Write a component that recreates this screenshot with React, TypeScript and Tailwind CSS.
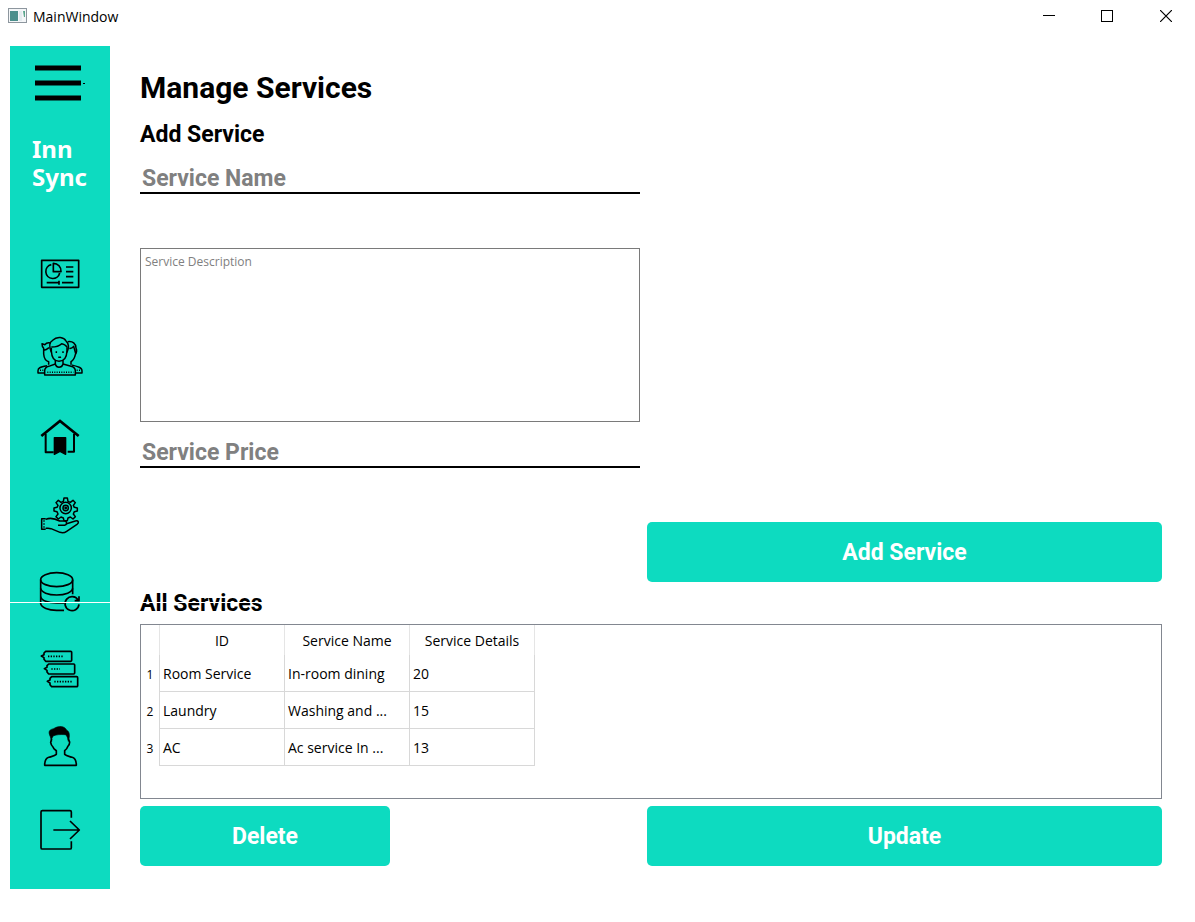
import type { ReactNode } from "react";

const nav: { label: string; viewBox: string; art: ReactNode }[] = [
  {
    label: "Dashboard",
    viewBox: "48 -33 144 240",
    art: (
      <g strokeWidth="5">
        <rect x="65" y="46" width="111" height="81" />
        <path d="M94 59a21 21 0 1 0 25 25" />
        <path d="M100 55v25h23a23 23 0 0 0-23-25z" />
        <path d="M138 66h22M138 80h22M138 95h22M80 113h36M126 113h34M117 107v12" />
      </g>
    ),
  },
  {
    label: "Guests",
    viewBox: "48 -33 144 240",
    art: (
      <g strokeWidth="4.5">
        <path d="M94 82c-7-17-6-31 4-36 14-14 34-9 40 2 9 8 9 20 3 34" />
        <path d="M94 66c14 0 24-3 31-10 8 2 14 5 16 11" />
        <path d="M94 68v10c1 19 9 31 23 31s23-12 24-31V67" />
        <path d="M106 106v12c2 6 6 9 11 9s10-3 12-9v-12" />
        <path d="M106 117l-20 7c-8 2-12 5-12 14v12h92v-12c0-9-5-12-13-14l-24-7" />
        <path d="M92 54c-9-2-14 0-17 5l-9-3c0 7 2 11 5 14v17c1 12 8 21 15 23v9M72 76c6-1 10-4 15-8" />
        <path d="M143 50c15-3 25 6 25 19 3 6 1 15-2 20-2 10-8 18-13 21v9M148 70c7 1 10-2 13-6l6 22" />
        <path d="M81 122c-15 4-27 4-27 15v7h18M155 120c17 4 31 7 31 17v7h-18" />
        <path d="M82 142h78M60 136h10M170 136h10" strokeDasharray="3 4" />
        <path d="M109 79v5M129 79v5M115 96q4 2 8 0" />
      </g>
    ),
  },
  {
    label: "Rooms",
    viewBox: "48 -48 144 240",
    art: (
      <g strokeWidth="6">
        <path d="M64 78l56-45 56 45" strokeWidth="8" strokeLinejoin="miter" />
        <path d="M77 71v56h24M162 71v54h-19" />
        <path d="M103 83h34v50l-17-9-17 9z" fill="black" strokeWidth="4" />
      </g>
    ),
  },
  {
    label: "Services",
    viewBox: "48 -48 144 240",
    art: (
      <g strokeWidth="4.5">
        <path d="M132 24h10l2 10 7 3 8-6 7 7-6 8 3 6 9 2v9l-9 2-3 7 6 8-7 7-8-6-7 3-2 8h-10l-2-8-7-3-8 6-7-7 6-8-3-7-9-2v-9l9-2 3-6-6-8 7-7 8 6 7-3z" />
        <circle cx="137" cy="54" r="17" />
        <circle cx="137" cy="54" r="8" />
        <circle cx="137" cy="54" r="2" fill="black" />
        <path d="M77 88c17-7 29-2 42 5h15c7 0 8 11 0 13h-20M140 101l26-8c10-2 12 5 5 10l-31 21c-7 5-13 5-20 3l-27-11c-6-2-10-1-16-1" />
        <path d="M77 86H65v32h12" />
        <path d="M70 93h4M70 102h4M70 111h4" />
      </g>
    ),
  },
  {
    label: "Backup",
    viewBox: "48 -33 144 240",
    art: (
      <g strokeWidth="5">
        <ellipse cx="110" cy="44" rx="48" ry="21" />
        <path d="M62 44v72c2 12 23 20 48 20h22M158 44v44" />
        <path d="M62 70c2 12 22 20 48 20s46-8 48-20M62 95c2 12 22 19 48 19h22" />
        <path d="M174 105a21 21 0 1 0 3 13M177 94v13h-13" />
      </g>
    ),
  },
  {
    label: "Bookings",
    viewBox: "48 -18 144 240",
    art: (
      <g strokeWidth="5">
        <path d="M77 34h75q3 0 3 3v24q0 3-3 3H77l-5-6v-5l-8-5 8-4v-5z" />
        <path d="M86 72h75q3 0 3 3v24q0 3-3 3H86l-5-6v-5l-8-5 8-4v-5z" />
        <path d="M95 110h75q3 0 3 3v24q0 3-3 3H95l-5-6v-5l-8-5 8-4v-5z" />
        <path d="M84 49h46M94 87h26M103 125h54" strokeDasharray="4 4" />
      </g>
    ),
  },
  {
    label: "Profile",
    viewBox: "48 -3 144 240",
    art: (
      <g strokeWidth="5">
        <path d="M91 65c-8-17-2-21 10-24 15-10 34-8 39 5 9 3 10 17 5 33-2-10-3-17-9-20-15-1-27 0-35 3-5 4-7 11-6 17z" fill="black" strokeWidth="2" />
        <path d="M95 72l-3 10c1 7 4 11 7 14 2 6 6 8 10 11v11c-6 6-15 6-23 9-9 3-12 9-12 24h95c0-15-3-21-12-24-8-3-17-3-23-9v-11c4-3 7-6 9-12 4-3 6-7 6-14l-4-9" />
      </g>
    ),
  },
  {
    label: "Log out",
    viewBox: "108 -18 144 240",
    art: (
      <g strokeWidth="5">
        <path d="M214 53V36q0-4-4-4h-83q-4 0-4 4v107q0 4 4 4h83q4 0 4-4v-19" />
        <path d="M160 90h78M210 63l28 27-28 27" />
      </g>
    ),
  },
];

const rows = [
  ["Room Service", "In-room dining", "20"],
  ["Laundry", "Washing and ...", "15"],
  ["AC", "Ac service In ...", "13"],
];

const segoe = "font-['Open_Sans','Noto_Sans',sans-serif]";
const fieldClass =
  "h-[34px] w-full border-b-2 border-black bg-white px-0.5 pt-1 text-[23px] leading-7 font-bold outline-none placeholder:text-[#808080] placeholder:opacity-100";
const buttonClass = "h-[60px] rounded-[5px] bg-[#0ddbc0] pt-0.5 text-[23px] font-bold text-white";

function TitleBar() {
  return (
    <header className={`flex h-8 items-center pl-2 ${segoe}`}>
      <svg width="19" height="16" viewBox="0 0 19 16" aria-hidden="true">
        <rect x="0.5" y="0.5" width="18" height="14" fill="#f4f6f8" stroke="#8d969e" />
        <rect x="2" y="3" width="8" height="10" fill="#4c8f8c" />
        <rect x="11" y="3" width="3" height="10" fill="#e4ebef" />
        <path d="M15 3h2v6h-1z" fill="#5aa58c" />
      </svg>
      <h1 className="ml-1.5 flex-1 pt-0.5 text-sm text-black">MainWindow</h1>
      <div className="flex">
        <button aria-label="Minimize" className="flex h-8 w-[58px] items-center justify-center">
          <svg width="12" height="12" shapeRendering="crispEdges"><path d="M0 5.5h12" stroke="black" /></svg>
        </button>
        <button aria-label="Maximize" className="flex h-8 w-[58px] items-center justify-center">
          <svg width="12" height="12"><rect x="0.5" y="0.5" width="11" height="11" fill="none" stroke="black" /></svg>
        </button>
        <button aria-label="Close" className="flex h-8 w-[59px] items-center justify-center">
          <svg width="12" height="12"><path d="M0 0l12 12M12 0L0 12" stroke="black" strokeWidth="1.2" /></svg>
        </button>
      </div>
    </header>
  );
}

function Sidebar() {
  return (
    <nav className="flex w-[100px] shrink-0 flex-col items-center bg-[#0ddbc0]">
      <button aria-label="Menu" className="mt-[19px] h-9">
        <svg width="52" height="36" viewBox="0 0 52 36">
          <path d="M1 3h46M1 18h46M1 33h46" stroke="black" strokeWidth="5" />
          <path d="M49 18.500h2" stroke="black" />
        </svg>
      </button>
      <p className="mt-[34px] w-14 font-['Noto_Sans',sans-serif] text-2xl leading-7 font-bold text-white">
        Inn Sync
      </p>
      <ul className="mt-[43px]">
        {nav.map((item) => (
          <li key={item.label}>
            <button aria-label={item.label} className="block">
              <svg
                className="h-20 w-12"
                viewBox={item.viewBox}
                fill="none"
                stroke="black"
                strokeLinejoin="round"
              >
                {item.art}
              </svg>
            </button>
          </li>
        ))}
      </ul>
    </nav>
  );
}

function ServicesTable() {
  return (
    <div className={`h-[175px] overflow-auto border border-[#828790] ${segoe}`}>
      <table className="table-fixed border-separate border-spacing-0 text-sm leading-5 text-black">
        <colgroup>
          <col className="w-[19px]" />
          <col className="w-[125px]" />
          <col className="w-[125px]" />
          <col className="w-[125px]" />
        </colgroup>
        <thead>
          <tr className="h-[30px]">
            <td className="border-r border-[#e5e5e5]" />
            {["ID", "Service Name", "Service Details"].map((name) => (
              <th key={name} scope="col" className="border-r border-[#e5e5e5] px-0 pt-0.5 pb-0 font-normal">
                {name}
              </th>
            ))}
          </tr>
        </thead>
        <tbody>
          {rows.map((row, i) => (
            <tr key={row[0]} className="h-[37px]">
              <th scope="row" className="border-r border-[#d8d8d8] px-0 pt-0.5 pb-0 text-xs font-normal">
                {i + 1}
              </th>
              {row.map((cell) => (
                <td key={cell} className="border-r border-b border-[#d8d8d8] pt-0.5 pr-0 pb-0 pl-[3px] whitespace-nowrap">
                  {cell}
                </td>
              ))}
            </tr>
          ))}
        </tbody>
      </table>
    </div>
  );
}

export default function App() {
  return (
    <div className="relative flex min-h-screen flex-col bg-white font-[Roboto,sans-serif] text-black">
      <TitleBar />
      <div className="mt-3.5 mb-[33px] flex flex-1 pl-2.5">
        <Sidebar />
        <main className="min-w-0 flex-1 pt-5 pr-[33px] pl-[30px]">
          <h2 className="text-3xl leading-[44px] font-bold">Manage Services</h2>
          <h3 className="mt-1.5 text-[23px] leading-[38px] font-bold">Add Service</h3>
          <form className="grid grid-cols-[500fr_515fr] gap-x-[7px]" onSubmit={(e) => e.preventDefault()}>
            <div className="mt-1.5 flex flex-col">
              <input aria-label="Service Name" placeholder="Service Name" className={fieldClass} />
              <textarea
                aria-label="Service Description"
                placeholder="Service Description"
                className={`mt-[54px] block h-[174px] w-full resize-none border border-[#7a7a7a] px-1 pt-[5px] text-xs leading-4 outline-none placeholder:text-[#808080] placeholder:opacity-100 ${segoe}`}
              />
              <input aria-label="Service Price" placeholder="Service Price" className={`mt-3 ${fieldClass}`} />
            </div>
            <button className={`col-start-2 row-start-2 mt-[54px] ${buttonClass}`}>Add Service</button>
          </form>
          <h3 className="mt-1 mb-0.5 text-[23px] leading-9 font-bold">All Services</h3>
          <ServicesTable />
          <div className="mt-[7px] grid grid-cols-[500fr_515fr] gap-x-[7px]">
            <button className={`w-1/2 ${buttonClass}`}>Delete</button>
            <button className={buttonClass}>Update</button>
          </div>
        </main>
      </div>
      <div className="pointer-events-none absolute top-[602px] left-0 h-px w-[300px] bg-white" />
    </div>
  );
}
